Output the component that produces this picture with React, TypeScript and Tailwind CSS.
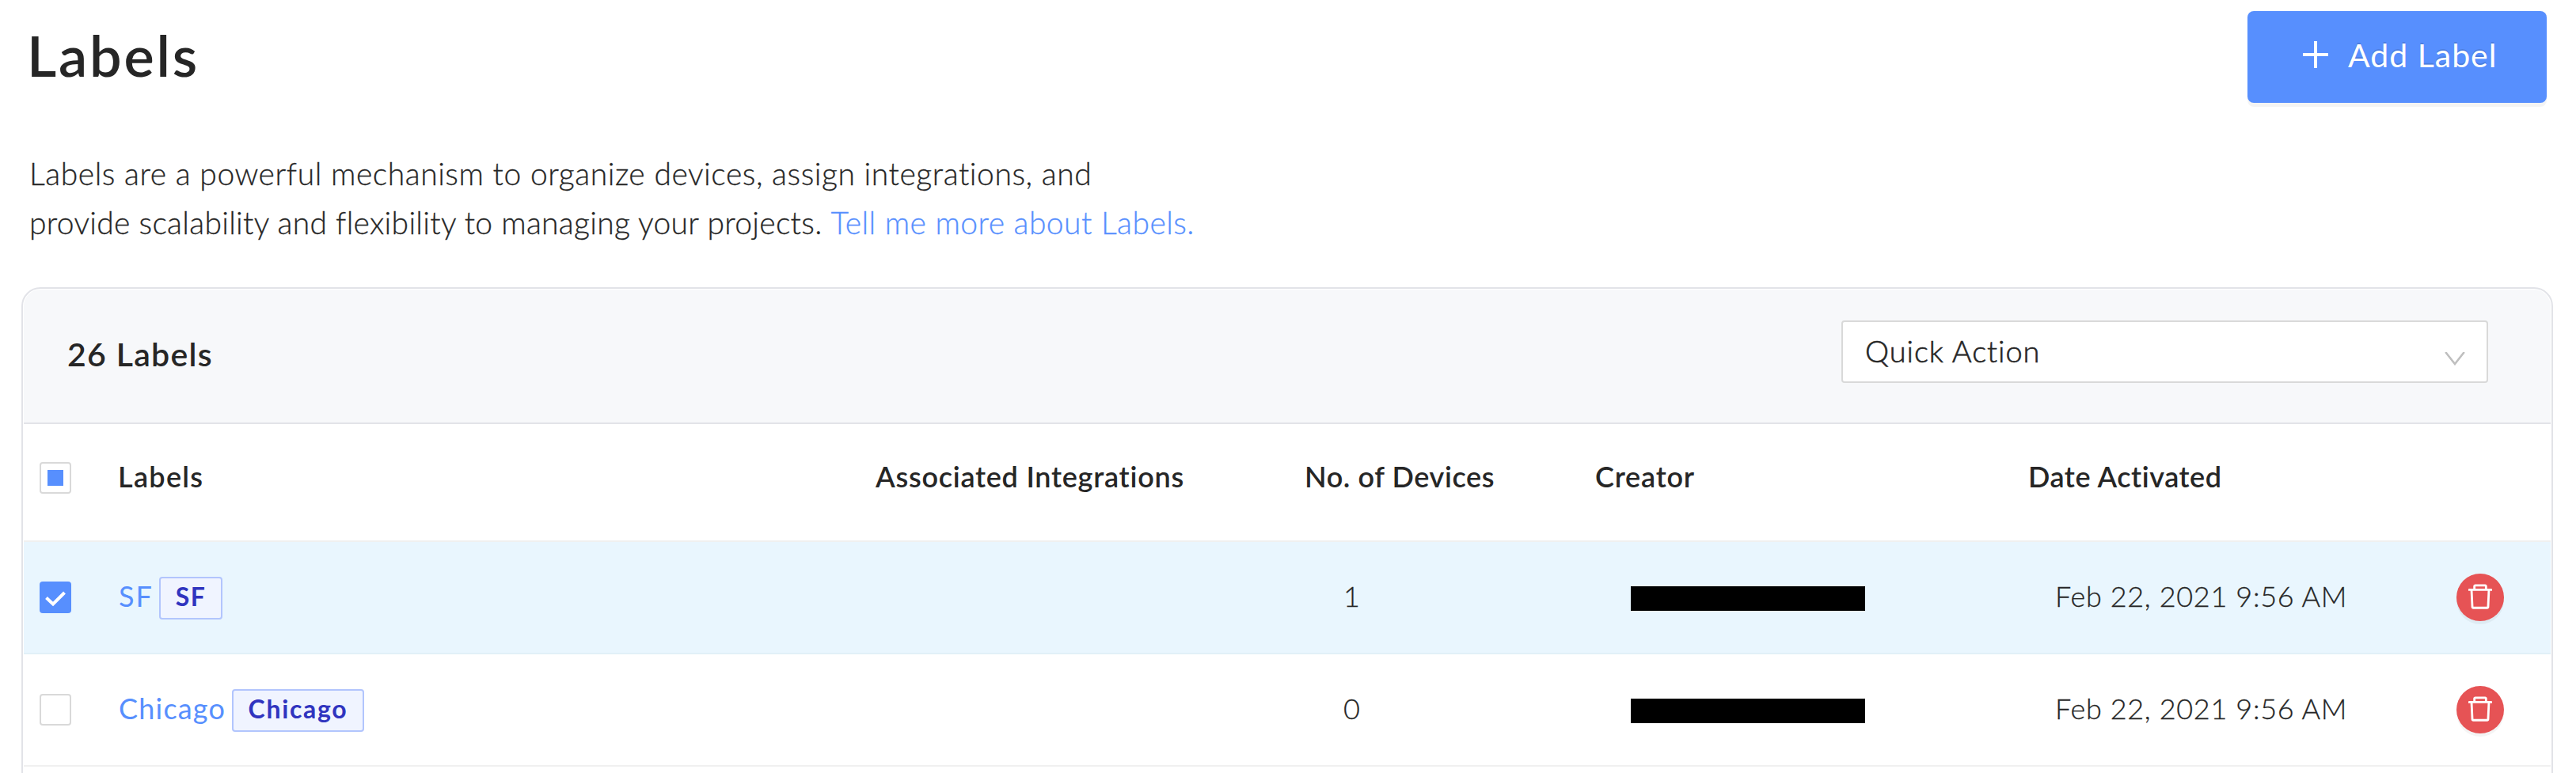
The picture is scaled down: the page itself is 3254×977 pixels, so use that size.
import React from "react";
import { AiOutlineDelete } from "react-icons/ai";

type Row = {
  name: string;
  checked: boolean;
  devices: number;
  date: string;
  nameClass: string;
  tagClass: string;
};

const rows: Row[] = [
  {
    name: "SF",
    checked: true,
    devices: 1,
    date: "Feb 22, 2021 9:56 AM",
    nameClass: "w-[52px] tracking-[2px]",
    tagClass: "w-[80px] tracking-[1.5px]",
  },
  {
    name: "Chicago",
    checked: false,
    devices: 0,
    date: "Feb 22, 2021 9:56 AM",
    nameClass: "w-[144px] tracking-[1.2px]",
    tagClass: "w-[167px] tracking-[1.7px]",
  },
];

const columns =
  "grid grid-cols-[119px_956px_543px_367px_547px_540px_120px] items-center";

function Checkbox({ state }: { state: "on" | "off" | "mixed" }) {
  if (state === "on") {
    return (
      <div className="ml-5 flex size-10 items-center justify-center rounded-[4px] bg-[#578ffe]">
        <svg viewBox="0 0 40 40" className="size-10" fill="none" stroke="#fff" strokeWidth="4">
          <path d="M8.5 20.5 L17 28.5 L31.5 14" />
        </svg>
      </div>
    );
  }
  return (
    <div className="ml-5 flex size-10 items-center justify-center rounded-[4px] border-2 border-[#d9d9d9] bg-white">
      {state === "mixed" && <div className="size-5 bg-[#578ffe]" />}
    </div>
  );
}

function LabelRow({ row }: { row: Row }) {
  return (
    <div
      className={`${columns} h-[142px] border-b-2 ${
        row.checked ? "border-[#e1f0f8] bg-[#e9f6fe]" : "border-[#f0f0f0] bg-white"
      }`}
    >
      <Checkbox state={row.checked ? "on" : "off"} />
      <div className="flex items-center">
        <a className={`${row.nameClass} pb-[5px] pl-px text-[36px] leading-[54px] text-[#578ffe]`}>
          {row.name}
        </a>
        <span
          className={`${row.tagClass} mt-0.5 flex h-[54px] items-center justify-center rounded-[4px] border-2 border-[#b2c5fd] bg-[#f0f4ff] pb-1 text-[32px] font-bold text-[#3034bf]`}
        >
          {row.name}
        </span>
      </div>
      <div />
      <div className="w-[116px] pb-[5px] pl-[49px] text-[36px] leading-[54px] font-light [-webkit-text-stroke:0.3px]">
        {row.devices}
      </div>
      <div className="mt-[3px] ml-[45px] h-[31px] w-[296px] bg-black" />
      <div className="pb-[5px] pl-[34px] text-[36px] leading-[54px] font-light tracking-[0.65px] [-webkit-text-stroke:0.3px]">
        {row.date}
      </div>
      <button className="ml-px flex size-[60px] items-center justify-center rounded-full bg-[#e65355] pb-[3px] shadow-[0_4px_0_rgba(0,0,0,0.045)]">
        <AiOutlineDelete className="size-10 text-white" />
      </button>
    </div>
  );
}

export default function App() {
  return (
    <div className="h-[977px] w-[3254px] overflow-hidden bg-white font-['Lato',sans-serif] text-[#262626]">
      <header className="flex h-[144px] items-start justify-between pr-[37px] pl-[34px]">
        <h1 className="pt-[19px] text-[72px] leading-[100px] font-semibold tracking-[2.8px]">Labels</h1>
        <button className="mt-[14px] flex h-[116px] w-[378px] items-center rounded-[8px] bg-[#578ffe] pb-1.5 pl-[70px] text-white shadow-[0_5px_0_rgba(0,0,0,0.043)]">
          <svg viewBox="0 0 32 34" className="h-[34px] w-8" stroke="#fff" strokeWidth="4">
            <path d="M16 0 V34 M0 17 H32" />
          </svg>
          <span className="ml-[25px] pt-0.5 text-[41px] leading-[60px] tracking-[1px] [text-shadow:0_-2px_0_rgba(0,0,0,0.12)]">
            Add Label
          </span>
        </button>
      </header>

      <p className="h-[219px] pt-[44px] pl-[37px] text-[39px] leading-[62px] font-light [-webkit-text-stroke:0.3px]">
        <span className="tracking-[0.55px]">
          Labels are a powerful mechanism to organize devices, assign integrations, and
        </span>
        <br />
        <span className="tracking-[0.3px]">
          provide scalability and flexibility to managing your projects.{" "}
        </span>
        <a className="tracking-[0.47px] text-[#578ffe]">Tell me more about Labels.</a>
      </p>

      <section className="ml-[27px] h-[640px] w-[3198px] rounded-t-[24px] border-2 border-[#e2e3e8] p-px">
        <div className="flex h-[170px] items-start justify-between rounded-t-[21px] border-b-2 border-[#e2e3e8] bg-[#f7f8fa] pr-[79px] pl-[55px]">
          <h2 className="pt-[52px] text-[41px] leading-[60px] font-semibold tracking-[1.3px]">26 Labels</h2>
          <div className="mt-[39px] flex h-[79px] w-[817px] items-center justify-between rounded-[4px] border-2 border-[#d9d9d9] bg-white pr-[27px] pl-7">
            <span className="pb-[3px] text-[38px] leading-[60px] font-light tracking-[0.95px] [-webkit-text-stroke:0.6px]">
              Quick Action
            </span>
            <svg viewBox="0 0 26 17" className="mt-[17px] h-[17px] w-[26px]" fill="none" stroke="#bfbfbf" strokeWidth="2.6">
              <path d="M1.2 0 L13 15 L24.8 0" />
            </svg>
          </div>
        </div>

        <div className={`${columns} h-[149px] border-b-2 border-[#f0f0f0] text-[36px] leading-[54px] font-semibold`}>
          <div className="pb-[11px]">
            <Checkbox state="mixed" />
          </div>
          <div className="pb-4 tracking-[1.3px]">Labels</div>
          <div className="pb-4 pl-px tracking-[0.75px]">Associated Integrations</div>
          <div className="pb-4 tracking-[0.6px]">No. of Devices</div>
          <div className="pb-4 tracking-[0.8px]">Creator</div>
          <div className="pb-4 tracking-[0.55px]">Date Activated</div>
          <div />
        </div>

        {rows.map((row) => (
          <LabelRow key={row.name} row={row} />
        ))}
      </section>
    </div>
  );
}
